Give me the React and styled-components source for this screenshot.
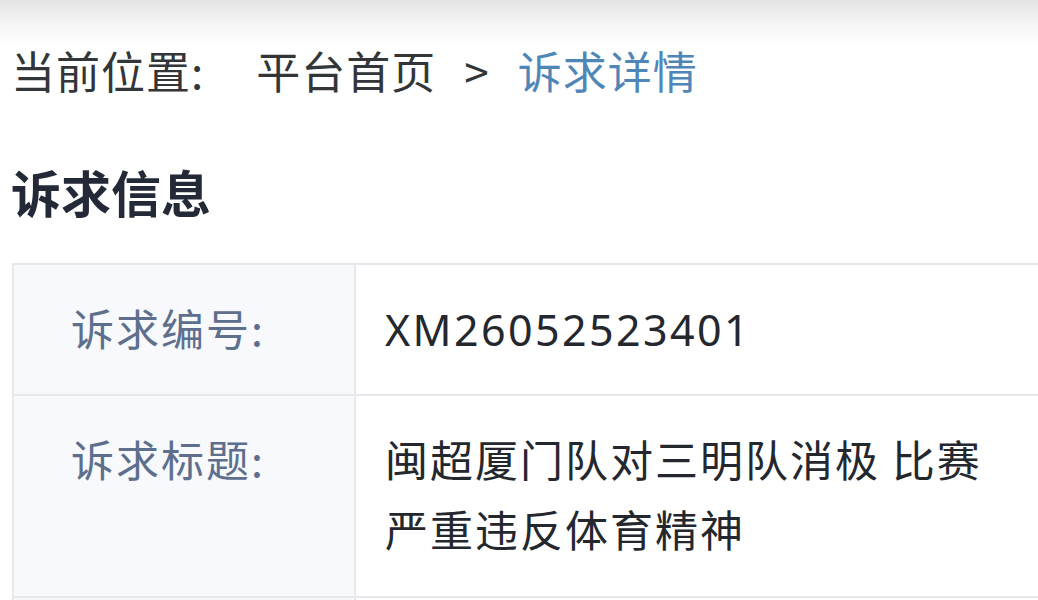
import React from "react";
import styled, { createGlobalStyle } from "styled-components";

const GlobalStyle = createGlobalStyle`
  html, body {
    margin: 0;
    padding: 0;
    background: #ffffff;
  }
  body {
    font-family: "Noto Sans CJK SC", "Noto Sans", sans-serif;
    overflow: hidden;
  }
`;

let Page = styled.div`
  width: 1038px;
  height: 600px;
  overflow: hidden;
  background: linear-gradient(180deg, #e4e4e4 0px, #f6f6f6 26px, #ffffff 46px);
  padding-left: 11px;
  box-sizing: border-box;
`;

let Breadcrumb = styled.div`
  display: flex;
  align-items: center;
  padding-top: 48px;
  height: 44px;
  font-size: 44px;
  line-height: 44px;
  letter-spacing: 1px;
  color: #333639;
`;

let Crumb = styled.span`
  color: ${({ active }) => (active ? "#4f86b8" : "#333639")};
  margin-left: ${({ gap }) => gap || 0}px;
`;

let Heading = styled.h2`
  margin: 74px 0 0;
  font-size: 50px;
  line-height: 50px;
  font-weight: 700;
  color: #232937;
`;

let InfoTable = styled.div`
  margin-top: 47px;
  margin-left: 1px;
  display: grid;
  grid-template-columns: 342px 1fr;
  border-top: 2px solid #e6e8ec;
  border-left: 2px solid #e6e8ec;
  width: 1100px;
`;

let Label = styled.div`
  background: #f7f9fc;
  border-right: 2px solid #e6e8ec;
  border-bottom: 2px solid #e6e8ec;
  padding: 27px 0 0 57px;
  height: ${({ h }) => h}px;
  box-sizing: border-box;
  font-size: 43px;
  line-height: 70px;
  letter-spacing: 2px;
  color: #5e6f8e;
`;

let Value = styled.div`
  background: #ffffff;
  border-bottom: 2px solid #e6e8ec;
  padding: 27px 0 0 29px;
  height: ${({ h }) => h}px;
  box-sizing: border-box;
  font-size: 43px;
  line-height: 70px;
  letter-spacing: 2px;
  color: #24282e;
`;

let Code = styled.span`
  font-family: "Noto Sans", sans-serif;
  letter-spacing: 2.4px;
`;

const App = () => {
  return (
    <>
      <GlobalStyle />
      <Page>
        <Breadcrumb>
          <Crumb>当前位置:</Crumb>
          <Crumb gap={52}>平台首页</Crumb>
          <Crumb gap={28}>&gt;</Crumb>
          <Crumb gap={28} active>
            诉求详情
          </Crumb>
        </Breadcrumb>
        <Heading>诉求信息</Heading>
        <InfoTable>
          <Label h={131}>诉求编号:</Label>
          <Value h={131}>
            <Code>XM26052523401</Code>
          </Value>
          <Label h={202}>诉求标题:</Label>
          <Value h={202}>
            闽超厦门队对三明队消极 比赛
            <br />
            严重违反体育精神
          </Value>
          <Label h={60} />
          <Value h={60} />
        </InfoTable>
      </Page>
    </>
  );
};

export default App;
